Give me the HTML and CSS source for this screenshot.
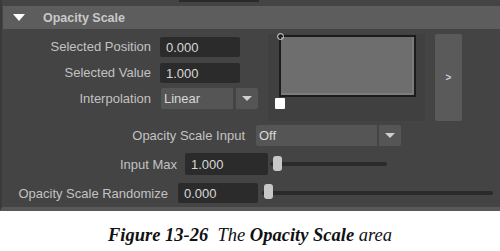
FILE: index.html
```html
<!DOCTYPE html>
<html lang="en">
<head>
  <meta charset="UTF-8" />
  <title>Opacity Scale</title>
  <link rel="stylesheet" href="styles.css">
</head>
<body>
  <div class="panel">
    <div class="top-strip"><div class="stub"></div></div>

    <div class="section-head">
      <span class="tri"></span>
      <span class="head-title">Opacity Scale</span>
    </div>

    <div class="upper">
      <div class="fields">
        <div class="row">
          <label class="lbl">Selected Position</label>
          <div class="field">0.000</div>
        </div>
        <div class="row">
          <label class="lbl">Selected Value</label>
          <div class="field">1.000</div>
        </div>
        <div class="row">
          <label class="lbl">Interpolation</label>
          <div class="combo combo-short">Linear</div>
          <div class="combo-btn combo-btn-gap"><span class="down"></span></div>
        </div>
      </div>

      <div class="ramp-area">
        <div class="ramp">
          <span class="ramp-knob"></span>
        </div>
        <span class="ramp-swatch"></span>
      </div>

      <div class="expand-btn">&gt;</div>
    </div>

    <div class="lower">
      <div class="row row-input">
        <label class="lbl">Opacity Scale Input</label>
        <div class="combo combo-long">Off</div>
        <div class="combo-btn"><span class="down"></span></div>
      </div>
      <div class="row row-max">
        <label class="lbl">Input Max</label>
        <div class="field field-wide">1.000</div>
        <div class="slider slider-short"><span class="thumb"></span></div>
      </div>
      <div class="row row-rand">
        <label class="lbl">Opacity Scale Randomize</label>
        <div class="field">0.000</div>
        <div class="slider slider-long"><span class="thumb"></span></div>
      </div>
    </div>
  </div>

  <p class="caption"><b>Figure 13-26</b>&nbsp; The <b>Opacity Scale</b> area</p>
</body>
</html>
```

FILE: styles.css
```css
body {
  margin: 0;
  background-color: #ffffff;
  font-family: "Liberation Sans", Arial, sans-serif;
}
.panel {
  height: 207px;
  background-color: #444444;
  border-left: 2px solid #3a3a3a;
  border-bottom: 4px solid #585858;
  color: #c2c2c2;
  font-size: 13px;
}
.top-strip {
  height: 6px;
}
.stub {
  margin-left: 177px;
  width: 80px;
  height: 2px;
  background-color: #2a2a2a;
}
.section-head {
  height: 23px;
  margin-left: 1px;
  background-color: #5d5d5d;
  display: flex;
  align-items: center;
}
.tri {
  width: 0;
  height: 0;
  margin-left: 10px;
  border-left: 6px solid transparent;
  border-right: 6px solid transparent;
  border-top: 7px solid #ffffff;
}
.head-title {
  margin-left: 18px;
  font-size: 12.5px;
  font-weight: bold;
  color: #c9c9c9;
}

.upper {
  display: flex;
  margin-top: 5px;
  height: 87px;
}
.fields {
  padding-top: 2px;
  display: flex;
  flex-direction: column;
  gap: 5px;
}
.row {
  display: flex;
  align-items: center;
  height: 21px;
}
.lbl {
  text-align: right;
  white-space: nowrap;
}
.fields .lbl {
  width: 149px;
  margin-right: 9px;
}
.field {
  width: 74px;
  height: 20px;
  padding-left: 6px;
  line-height: 21px;
  background-color: #2b2b2b;
  border-radius: 2px;
  color: #d8d8d8;
}
.combo {
  height: 21px;
  line-height: 22px;
  padding-left: 3px;
  background-color: #555555;
  color: #d8d8d8;
  border-radius: 2px 0 0 2px;
}
.combo-short {
  width: 69px;
  margin-left: 1px;
}
.combo-btn {
  width: 22px;
  height: 21px;
  margin-left: 2px;
  background-color: #555555;
  border-radius: 0 2px 2px 0;
  display: flex;
  align-items: center;
  justify-content: center;
}
.combo-btn-gap {
  margin-left: 3px;
}
.down {
  width: 0;
  height: 0;
  border-left: 5px solid transparent;
  border-right: 5px solid transparent;
  border-top: 5px solid #cfcfcf;
}

.ramp-area {
  margin-left: 10px;
  width: 157px;
  background-color: #404040;
  position: relative;
}
.ramp {
  position: absolute;
  left: 11px;
  top: 1px;
  width: 133px;
  height: 58px;
  border: 2px solid #1c1c1c;
  background-color: #6e6e6e;
  box-shadow: inset -2px -2px 0 #7c7c7c;
}
.ramp-knob {
  position: absolute;
  left: -4px;
  top: -4px;
  width: 5px;
  height: 5px;
  border: 1px solid #d8d8d8;
  border-radius: 50%;
}
.ramp-swatch {
  position: absolute;
  left: 7px;
  top: 64px;
  width: 10px;
  height: 11px;
  background-color: #ffffff;
  border-radius: 1px;
}
.expand-btn {
  margin-left: 10px;
  width: 27px;
  background-color: #5a5a5a;
  border-radius: 2px;
  display: flex;
  align-items: center;
  justify-content: center;
  font-size: 10px;
  font-weight: bold;
  color: #c4ccd8;
}

.lower {
  margin-top: 3px;
  display: flex;
  flex-direction: column;
  gap: 7px;
}
.lower .row {
  height: 22px;
}
.row-input .lbl {
  width: 243px;
  margin-right: 11px;
}
.combo-long {
  width: 118px;
}
.row-max .lbl {
  width: 175px;
  margin-right: 8px;
}
.field-wide {
  width: 77px;
  height: 22px;
  line-height: 23px;
}
.row-rand .lbl {
  width: 166px;
  margin-right: 10px;
}
.slider {
  position: relative;
  height: 4px;
  background-color: #2a2a2a;
  border-radius: 2px;
}
.slider-short {
  margin-left: 2px;
  width: 117px;
}
.slider-long {
  margin-left: 4px;
  width: 231px;
}
.thumb {
  position: absolute;
  top: -6px;
  width: 9px;
  height: 15px;
  background-color: #c8c8c8;
  border-radius: 3px;
}
.slider-short .thumb {
  left: 3px;
}
.slider-long .thumb {
  left: 2px;
  top: -7px;
}

.caption {
  margin: 14px 0 0;
  text-align: center;
  font-family: "Liberation Serif", "Times New Roman", serif;
  font-style: italic;
  font-size: 18.5px;
  color: #111111;
}
```
